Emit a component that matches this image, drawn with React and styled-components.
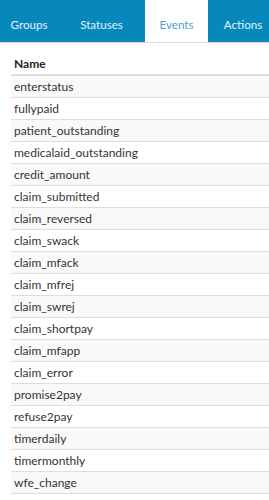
import React from 'react';
import styled, { createGlobalStyle } from 'styled-components';

const GlobalStyle = createGlobalStyle`
  html, body {
    margin: 0;
    padding: 0;
    background: #fff;
    font-family: Lato, "Open Sans", sans-serif;
  }
`;

export const Wrapper = styled.div`
  width: 269px;
  overflow: hidden;
`;

export const TabBar = styled.ul`
  display: flex;
  margin: 0;
  padding: 0;
  height: 42px;
  background: #0688bd;
  border-bottom: 1px solid #dddddd;
`;

export const Tab = styled.li`
  list-style: none;
  display: flex;
  align-items: center;
  justify-content: center;
  flex: none;
  width: ${({ $w }) => $w}px;
  padding-top: 6px;
  box-sizing: border-box;
  font-size: 11.6px;
  color: ${({ $active }) => ($active ? '#4a9fd3' : '#e3f1f8')};
  background: ${({ $active }) => ($active ? '#ffffff' : 'transparent')};
  white-space: nowrap;
`;

export const Content = styled.div`
  padding: 10px 0 0 11px;
`;

export const Table = styled.table`
  width: 100%;
  border-collapse: collapse;
  font-size: 12px;
  color: #333;
`;

export const HeadCell = styled.th`
  text-align: left;
  font-weight: 700;
  height: 21px;
  padding: 0 3px;
  border-bottom: 2px solid #dddddd;
  color: #222;
`;

export const Row = styled.tr`
  background: ${({ $odd }) => ($odd ? '#f9f9f9' : '#ffffff')};
`;

export const Cell = styled.td`
  height: 21px;
  padding: 0 3px;
  border-bottom: 1px solid #dddddd;
`;

const tabs = [
  { label: 'Groups', w: 58 },
  { label: 'Statuses', w: 87 },
  { label: 'Events', w: 63, active: true },
  { label: 'Actions', w: 70 },
];

const events = [
  'enterstatus',
  'fullypaid',
  'patient_outstanding',
  'medicalaid_outstanding',
  'credit_amount',
  'claim_submitted',
  'claim_reversed',
  'claim_swack',
  'claim_mfack',
  'claim_mfrej',
  'claim_swrej',
  'claim_shortpay',
  'claim_mfapp',
  'claim_error',
  'promise2pay',
  'refuse2pay',
  'timerdaily',
  'timermonthly',
  'wfe_change',
];

export default function App() {
  return (
    <Wrapper>
      <GlobalStyle />
      <TabBar>
        {tabs.map((t) => (
          <Tab key={t.label} $w={t.w} $active={t.active}>
            {t.label}
          </Tab>
        ))}
      </TabBar>
      <Content>
        <Table>
          <thead>
            <tr>
              <HeadCell>Name</HeadCell>
            </tr>
          </thead>
          <tbody>
            {events.map((e, i) => (
              <Row key={e} $odd={i % 2 === 0}>
                <Cell>{e}</Cell>
              </Row>
            ))}
          </tbody>
        </Table>
      </Content>
    </Wrapper>
  );
}
